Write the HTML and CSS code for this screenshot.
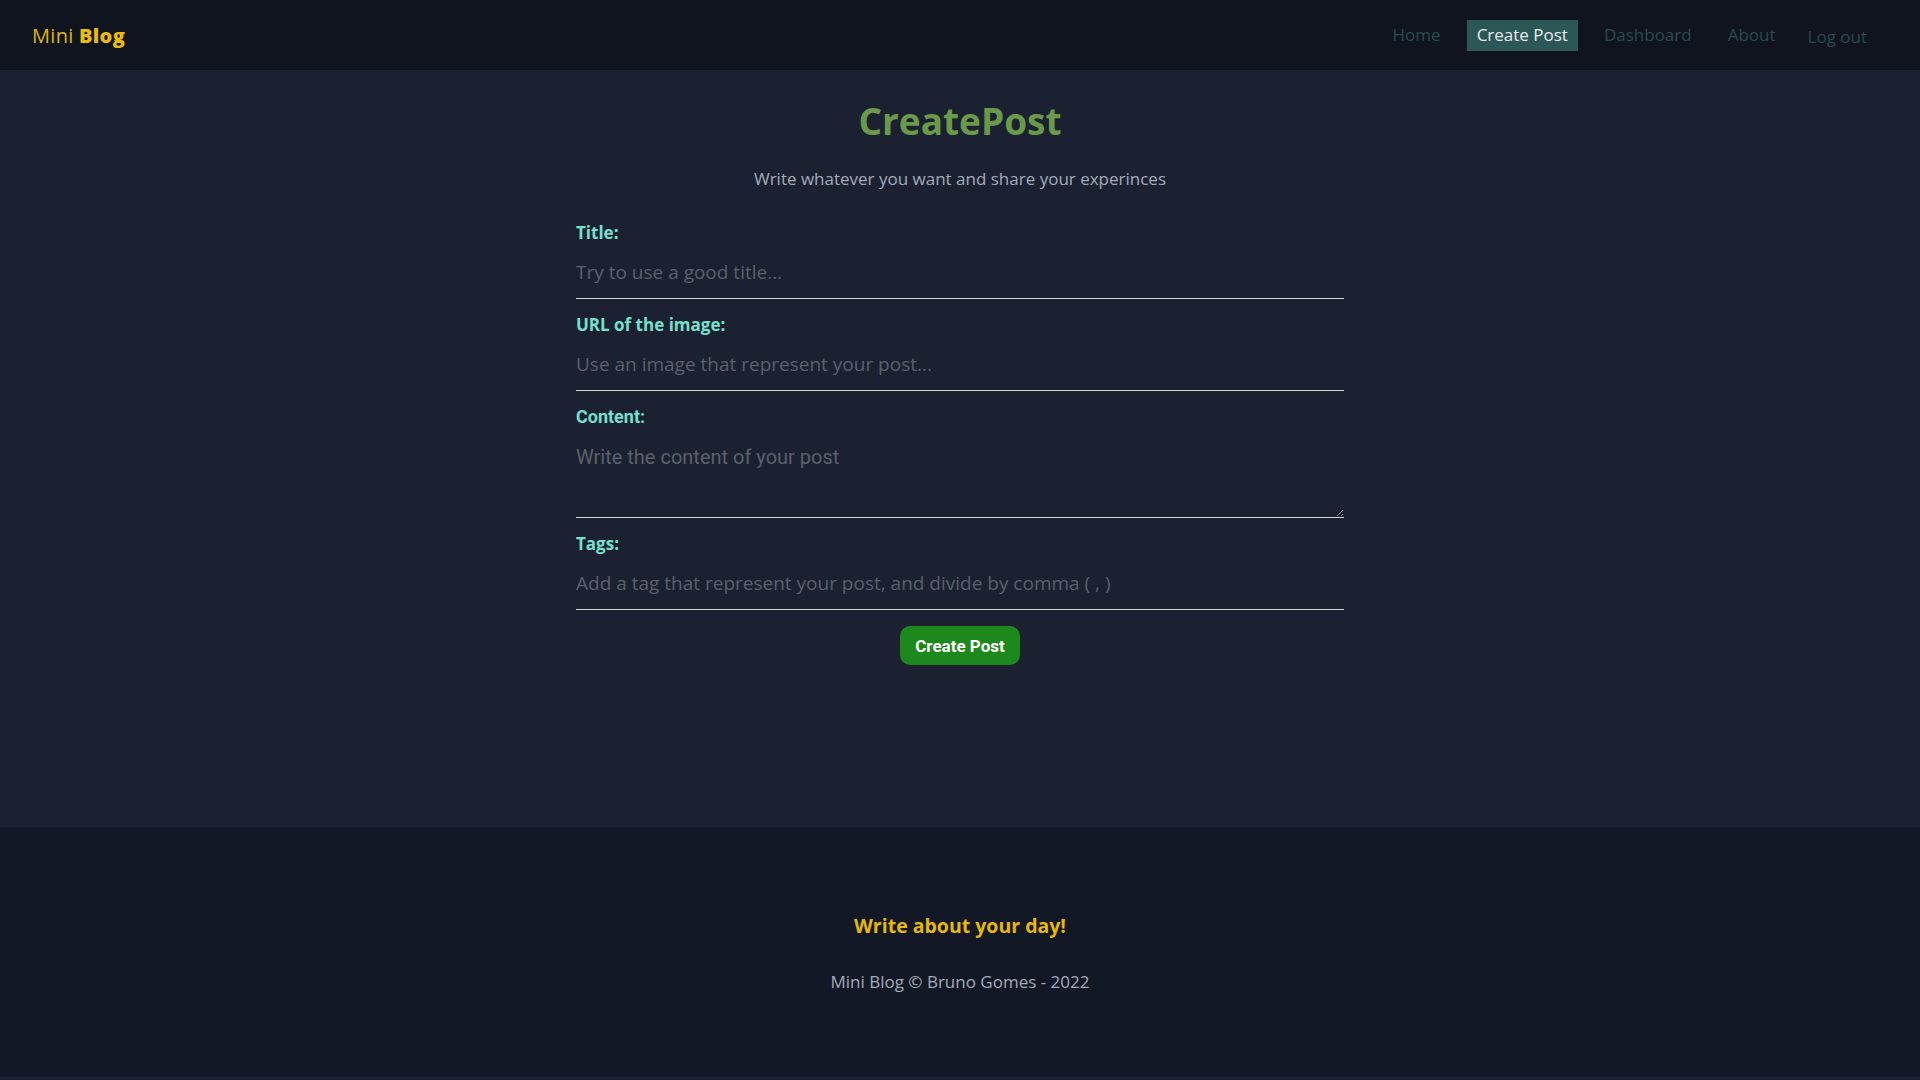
FILE: index.html
```html
<!DOCTYPE html>
<html lang="en">
<head>
<meta charset="utf-8">
<title>Mini Blog</title>
<link rel="stylesheet" href="styles.css">
</head>
<body>
<nav class="navbar">
  <a class="brand" href="#">Mini <span class="brand-bold">Blog</span></a>
  <ul class="nav-links">
    <li><a class="nav-link" href="#">Home</a></li>
    <li><a class="nav-link active" href="#">Create Post</a></li>
    <li><a class="nav-link" href="#">Dashboard</a></li>
    <li><a class="nav-link" href="#">About</a></li>
    <li><button class="nav-logout" type="button">Log out</button></li>
  </ul>
</nav>
<main class="main">
  <section class="create-post">
    <h2 class="page-title">CreatePost</h2>
    <p class="page-subtitle">Write whatever you want and share your experinces</p>
    <form class="post-form">
      <label class="field">
        <span class="field-label">Title:</span>
        <input class="field-input" type="text" placeholder="Try to use a good title...">
      </label>
      <label class="field">
        <span class="field-label">URL of the image:</span>
        <input class="field-input" type="text" placeholder="Use an image that represent your post...">
      </label>
      <label class="field">
        <span class="field-label field-label-alt">Content:</span>
        <textarea class="field-textarea" placeholder="Write the content of your post"></textarea>
      </label>
      <label class="field">
        <span class="field-label">Tags:</span>
        <input class="field-input" type="text" placeholder="Add a tag that represent your post, and divide by comma ( , )">
      </label>
      <button class="btn-submit" type="button">Create Post</button>
    </form>
  </section>
</main>
<footer class="footer">
  <h3 class="footer-title">Write about your day!</h3>
  <p class="footer-copy">Mini Blog &copy; Bruno Gomes - 2022</p>
</footer>
</body>
</html>
```
FILE: styles.css
```css
* { box-sizing: border-box; }

html, body {
  margin: 0;
  padding: 0;
}

body {
  background: #1c2131;
  font-family: "Open Sans", "DejaVu Sans", sans-serif;
  color: #a3abba;
}

.navbar {
  height: 70px;
  background: #0f141f;
  display: flex;
  align-items: center;
  justify-content: space-between;
  padding: 0 47px 0 32px;
}

.brand {
  font-size: 20px;
  color: #dcb614;
  text-decoration: none;
  letter-spacing: 0.3px;
}

.brand-bold {
  font-weight: 800;
  color: #e8bb10;
}

.nav-links {
  list-style: none;
  margin: 0;
  padding: 0;
  display: flex;
  align-items: center;
  gap: 16px;
}

.nav-link {
  display: block;
  padding: 5px 10px 6px;
  line-height: 20px;
  font-size: 17px;
  color: #2b4a50;
  text-decoration: none;
}

.nav-link.active {
  background: #2b5757;
  color: #e9ecec;
}

.nav-logout {
  background: none;
  border: none;
  padding: 7px 6px 3px;
  font-family: inherit;
  font-size: 17px;
  line-height: 20px;
  color: #2b4a50;
  cursor: pointer;
}

.main {
  height: 757px;
  padding-top: 31px;
}

.create-post {
  display: flex;
  flex-direction: column;
  align-items: center;
}

.page-title {
  margin: 0;
  font-size: 37px;
  line-height: 40px;
  font-weight: 700;
  color: #6a9a49;
}

.page-subtitle {
  margin: 28px 0 34px;
  font-size: 17px;
  line-height: 20px;
  color: #a3abba;
}

.post-form {
  width: 768px;
  display: flex;
  flex-direction: column;
  align-items: center;
  gap: 16px;
}

.field {
  width: 100%;
  display: flex;
  flex-direction: column;
}

.field-label {
  font-size: 17px;
  line-height: 20px;
  font-weight: 700;
  color: #76e0cd;
}

.field-label-alt {
  font-family: Roboto, "Liberation Sans", sans-serif;
  font-size: 18px;
}

.field-input {
  height: 56px;
  padding: 20px 0 17px;
  border: none;
  border-bottom: 1px solid #d6d6d6;
  background: transparent;
  font-family: inherit;
  font-size: 19px;
  line-height: 18px;
  color: #d6d6d6;
  outline: none;
}

.field-input::placeholder {
  color: #5a606c;
}

.field-textarea {
  height: 91px;
  padding: 19px 0 0;
  border: none;
  border-bottom: 1px solid #d6d6d6;
  background: transparent;
  font-family: Roboto, "Liberation Sans", sans-serif;
  font-size: 20px;
  line-height: 22px;
  color: #d6d6d6;
  outline: none;
}

.field-textarea::placeholder {
  color: #5a606c;
}

.btn-submit {
  margin-top: 0;
  width: 120px;
  height: 39px;
  border: none;
  border-radius: 10px;
  background: #1d891c;
  color: #ffffff;
  font-family: Roboto, "Liberation Sans", sans-serif;
  font-weight: 700;
  font-size: 17px;
  cursor: pointer;
}

.footer {
  height: 250px;
  margin-bottom: 3px;
  background: #121826;
  display: flex;
  flex-direction: column;
  align-items: center;
  justify-content: center;
}

.footer-title {
  margin: 0 0 32px;
  font-size: 19.5px;
  line-height: 27px;
  font-weight: 700;
  color: #e6b80c;
}

.footer-copy {
  margin: 0;
  font-size: 17px;
  line-height: 22px;
  color: #a3abba;
}
```
